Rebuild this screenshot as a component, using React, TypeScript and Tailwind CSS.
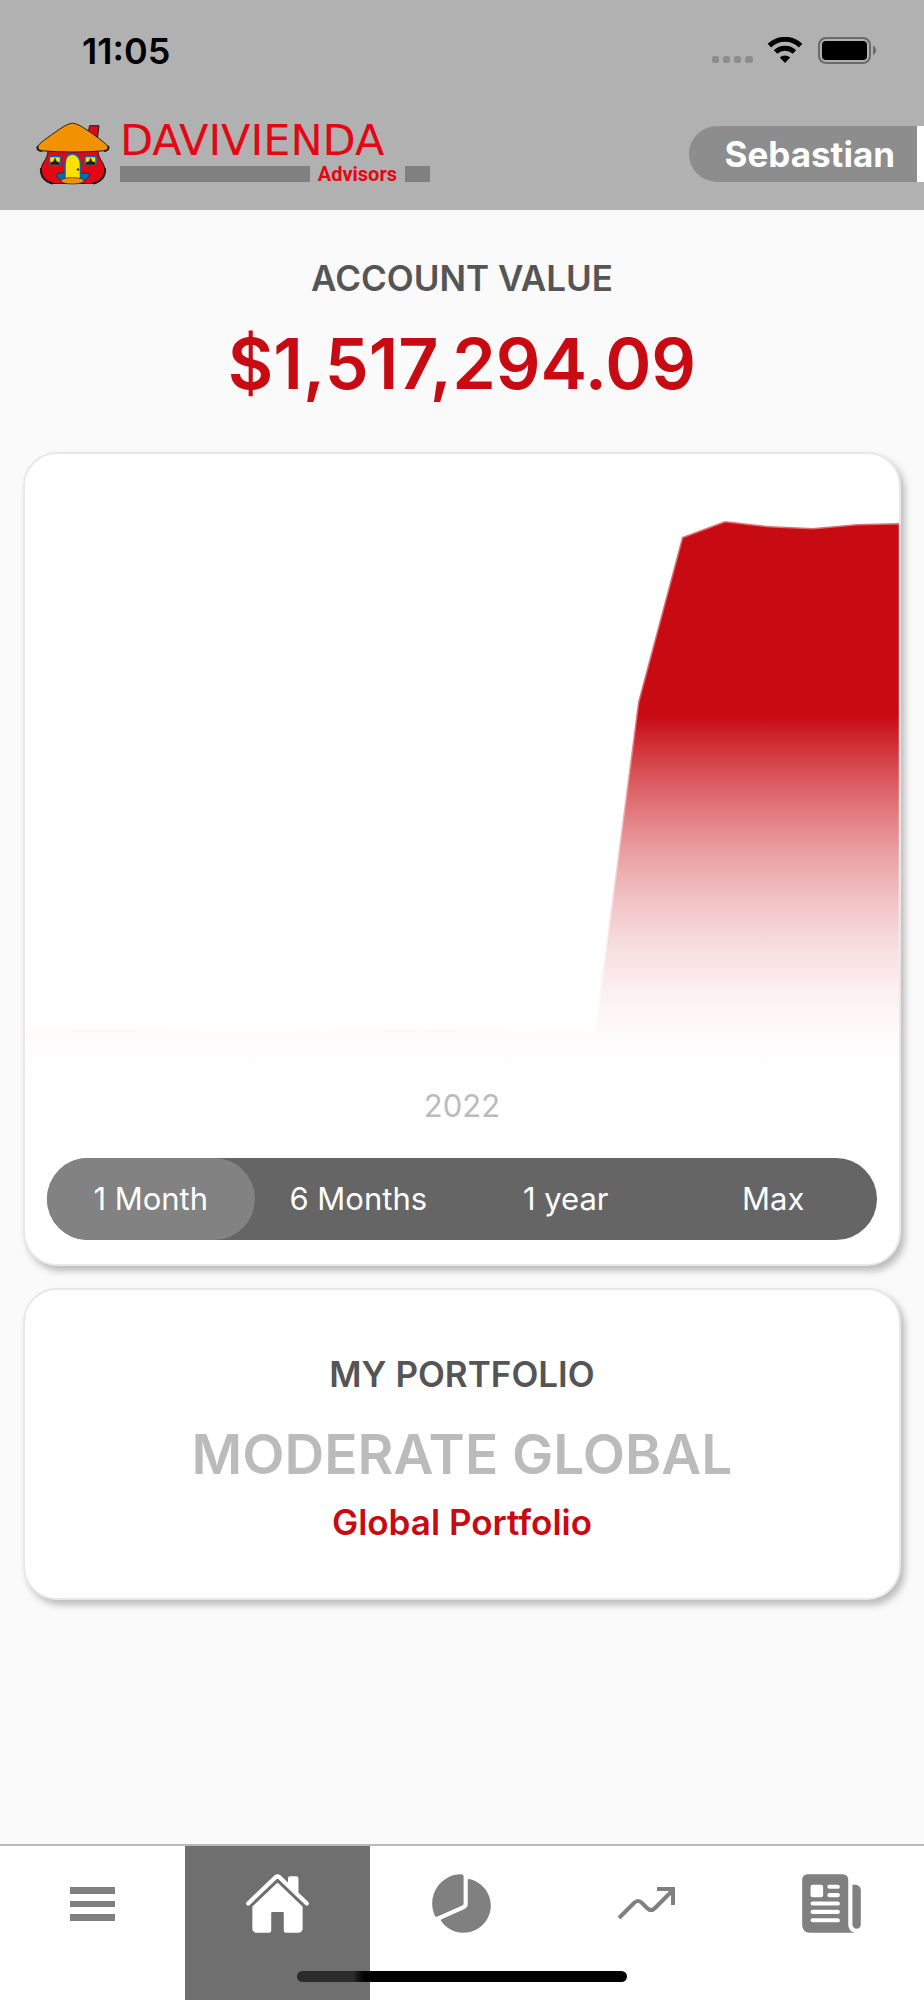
import { useState } from "react";
import { IoHome, IoNewspaper, IoPieChart } from "react-icons/io5";

const ranges = ["1 Month", "6 Months", "1 year", "Max"];

function StatusIcons() {
  return (
    <svg className="h-7 w-[165px]" viewBox="0 0 165 28">
      <g fill="#8d8d8d">
        <rect x="1" y="19" width="7" height="7" rx="2.5" />
        <rect x="12" y="19" width="7" height="7" rx="2.5" />
        <rect x="23" y="19" width="7" height="7" rx="2.5" />
        <rect x="34" y="19" width="8" height="7" rx="2.5" />
      </g>
      <g fill="none" stroke="#000" strokeWidth="5">
        <path d="M58.4 8.600a22.500 22.500 0 0 1 31.200 0" />
        <path d="M64.600 15a13.600 13.600 0 0 1 18.800 0" />
      </g>
      <path d="M68.800 20.600a7.500 7.500 0 0 1 10.400 0L74 26z" />
      <rect x="108" y="1" width="51" height="25" rx="7" fill="none" stroke="#6b6b6b" strokeWidth="2" />
      <rect x="111" y="4" width="45" height="19" rx="4" />
      <path d="M162 8.500c4 1.500 4 8 0 9.500z" fill="#6b6b6b" />
    </svg>
  );
}

function House() {
  return (
    <svg className="h-16 w-[74px]" viewBox="0 0 74 64" stroke="#1d1d1b" strokeWidth="1">
      <path d="M52 12l1.500-8.300h9.500L61.500 16z" fill="#e30613" />
      <path
        d="M12 28C12 38 5 40 5 49c0 8 6 12 12 12.500h40c6-.5 12-4.500 12-12.500 0-9-7-11-7-21z"
        fill="#e30613"
      />
      <path d="M5 46c-1 9 5 14 12 15.500M69 46c1 9-5 14-12 15.500" fill="none" strokeWidth="2" />
      <path
        d="M36.500 1.300c5 0 12 5 18 9 7 5 15 11 17.500 14 1.500 3-1 4.500-4 4.500-20 1.600-42 1.600-62 0-3.500 0-6-2-4-5 3-4 11-9 17-13.500 6-4 12.500-9 17.500-9z"
        fill="#f39200"
      />
      <path d="M2 24c-1.500 3 .5 5 4 5M72 24c1.500 3-1 5-4 5" fill="none" strokeWidth="2" />
      <path d="M28 51h17c2 0 8 0 9 1-1 5-7 8-11 8H31c-4 0-10-3-11-8 1-1 6-1 8-1z" fill="#0069b4" strokeWidth=".6" />
      <rect x="13.500" y="34.500" width="11" height="8.500" rx="1" fill="#ffe000" stroke="#0069b4" strokeWidth="1.500" />
      <rect x="49" y="34.500" width="11" height="8.500" rx="1" fill="#ffe000" stroke="#0069b4" strokeWidth="1.500" />
      <path d="M14.500 42.500v-2l3-1 1.500-3.500 1.500 3.500 3 1v2zM50 42.500v-2l3-1 1.500-3.500 1.500 3.500 3 1v2z" fill="#1d1d1b" strokeWidth=".4" />
      <path d="M29 57V43c0-7 3-11 7.500-11S44.500 36 44.500 43v14z" fill="#ffe000" stroke="#0069b4" strokeWidth="1.600" />
      <circle cx="42" cy="47.500" r=".8" fill="#1d1d1b" />
      <ellipse cx="36.500" cy="58.800" rx="11.500" ry="3.200" fill="#f39200" strokeWidth=".6" />
    </svg>
  );
}

function Logo() {
  return (
    <div className="flex items-center gap-2.5">
      <House />
      <div className="w-[310px]">
        <div className="h-10 font-['DejaVu_Sans',sans-serif] text-[43px] leading-9 text-[#e30613]">DAVIVIENDA</div>
        <div className="flex h-6 items-center gap-2">
          <span className="h-4 flex-1 bg-[#808080]" />
          <span className="font-['Roboto',sans-serif] text-[20px] leading-6 font-bold text-[#e30613]">Advisors</span>
          <span className="h-4 w-[25px] bg-[#808080]" />
        </div>
      </div>
    </div>
  );
}

function Chart() {
  return (
    <svg className="block h-auto w-full" viewBox="0 0 874 628">
      <defs>
        <linearGradient id="fade" gradientUnits="userSpaceOnUse" x1="0" y1="262" x2="0" y2="628">
          <stop offset="0" stopColor="#c80b12" />
          <stop offset=".125" stopColor="#c80b12" stopOpacity=".766" />
          <stop offset=".25" stopColor="#c80b12" stopOpacity=".563" />
          <stop offset=".375" stopColor="#c80b12" stopOpacity=".39" />
          <stop offset=".5" stopColor="#c80b12" stopOpacity=".25" />
          <stop offset=".625" stopColor="#c80b12" stopOpacity=".14" />
          <stop offset=".75" stopColor="#c80b12" stopOpacity=".063" />
          <stop offset=".875" stopColor="#c80b12" stopOpacity=".016" />
          <stop offset="1" stopColor="#c80b12" stopOpacity="0" />
        </linearGradient>
      </defs>
      <path
        d="M0 576L88 574L175 577L263 577L350 575L394 574L482 576L570 577L613 248L657 83L700 67L744 72L788 74L832 70L875 69V630H0z"
        fill="url(#fade)"
        stroke="#fff"
        strokeOpacity=".4"
        strokeWidth="3"
      />
    </svg>
  );
}

function MenuIcon() {
  return (
    <svg className="h-[68px] w-[68px]" viewBox="0 0 68 68" fill="currentColor">
      <path d="M12 17h45v7H12zM12 31h45v6H12zM12 44h45v7H12z" />
    </svg>
  );
}

function TrendIcon() {
  return (
    <svg className="h-[68px] w-[68px]" viewBox="0 0 68 68" fill="none" stroke="currentColor" strokeWidth="4">
      <path d="M6 48l15-15q4-4 8 0l5 5q4 4 8 0l18-18" />
      <path d="M44 19h16v16" />
    </svg>
  );
}

const tabs = [
  { name: "Menu", icon: <MenuIcon /> },
  { name: "Home", icon: <IoHome size={67} /> },
  { name: "Portfolio", icon: <IoPieChart size={67} /> },
  { name: "Performance", icon: <TrendIcon /> },
  { name: "News", icon: <IoNewspaper size={67} /> },
];

export default function App() {
  const [range, setRange] = useState("1 Month");
  const [tab, setTab] = useState("Home");

  return (
    <div className="flex min-h-screen flex-col overflow-x-hidden bg-[#fafafa] font-['Inter',sans-serif]">
      <header className="bg-[#b1b1b1] pb-6">
        <div className="flex h-[102px] items-center justify-between pr-12 pl-[82px]">
          <span className="text-[36px] leading-10 font-semibold text-black">11:05</span>
          <StatusIcons />
        </div>
        <div className="mt-5 flex items-center justify-between pl-9">
          <Logo />
          <div className="flex h-14">
            <button className="rounded-l-full bg-[#8d8d8d] pr-[22px] pl-[35px] text-[35px] leading-none font-bold text-white">
              Sebastian
            </button>
            <span className="w-[7px] bg-white" />
          </div>
        </div>
      </header>

      <main className="flex flex-1 flex-col px-[23px]">
        <section className="pt-11 text-center">
          <h1 className="text-[35px] leading-12 font-semibold text-[#555]">ACCOUNT VALUE</h1>
          <p className="mt-[18px] text-[70px] leading-[88px] font-semibold text-[#c80b12]">$1,517,294.09</p>
        </section>

        <section className="mt-11 overflow-hidden rounded-[34px] border-2 border-[#e8e8e8] bg-white shadow-[4px_5px_7px_rgba(0,0,0,0.25)]">
          <Chart />
          <p className="mt-1 text-center text-[31px] leading-10 text-[#bbb]">2022</p>
          <div className="mx-[22px] mt-8 mb-6 flex h-[82px] rounded-full bg-[#656565]">
            {ranges.map((r) => (
              <button
                key={r}
                onClick={() => setRange(r)}
                className={`flex-1 rounded-full text-[31px] text-white ${r === range ? "bg-[#828282]" : ""}`}
              >
                {r}
              </button>
            ))}
          </div>
        </section>

        <section className="mt-[22px] rounded-[34px] border-2 border-[#e8e8e8] bg-white pt-16 pb-14 text-center shadow-[4px_5px_7px_rgba(0,0,0,0.25)]">
          <h2 className="text-[35px] leading-10 font-semibold text-[#555]">MY PORTFOLIO</h2>
          <p className="mt-6 text-[55px] leading-[72px] font-semibold text-[#bbb]">MODERATE GLOBAL</p>
          <p className="mt-3 text-[35px] leading-10 font-semibold text-[#c80b12]">Global Portfolio</p>
        </section>
      </main>

      <nav className="relative flex h-[156px] border-t-2 border-[#b9b9b9] bg-white">
        {tabs.map((t) => (
          <button
            key={t.name}
            aria-label={t.name}
            onClick={() => setTab(t.name)}
            className={`flex flex-1 justify-center pt-6 ${t.name === tab ? "bg-[#6f6f6f] text-white" : "text-[#808080]"}`}
          >
            {t.icon}
          </button>
        ))}
        <div className="absolute bottom-[18px] left-1/2 h-[11px] w-[330px] -translate-x-1/2 rounded-full bg-linear-to-r from-[#2c2c2c] from-17% to-black to-22%" />
      </nav>
    </div>
  );
}
